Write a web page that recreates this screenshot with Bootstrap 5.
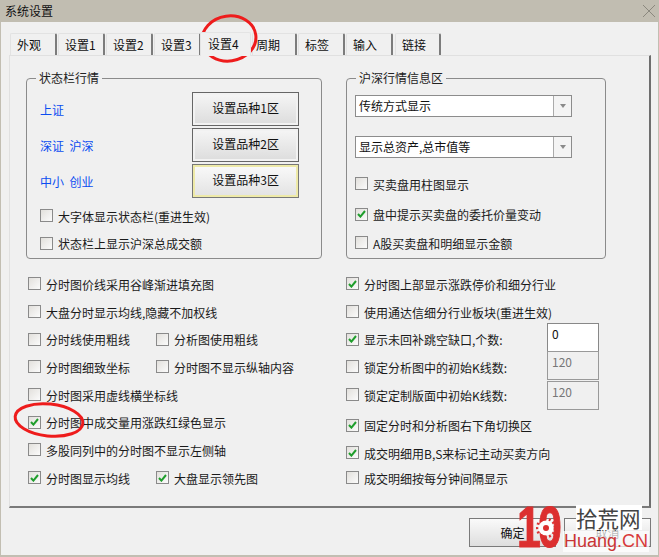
<!DOCTYPE html>
<html lang="zh-CN">
<head>
<meta charset="utf-8">
<title>系统设置</title>
<link href="https://cdn.jsdelivr.net/npm/bootstrap@5.3.0/dist/css/bootstrap.min.css" rel="stylesheet">
<style>
html,body{margin:0;padding:0;width:659px;height:557px;overflow:hidden;background:#f0f0f0}
body{font-family:"Noto Sans CJK SC","Liberation Sans",sans-serif;font-size:12px;line-height:16px;color:#1a1a1a}
.dlg{position:relative;width:659px;height:557px;background:#f0f0f0;border:solid #c2beb2;border-width:0 1px 2px 1px}
.dlg-title{height:22px;background:#c1bdb1;color:#111;margin:0 -1px;padding:0 4px 0 5px}
.dlg-close{width:12px;height:12px}
.tabrow{height:33px;padding:11px 0 0 9px;margin:0;flex-wrap:nowrap}
.tabrow .nav-item{margin-right:1px}
.tabbtn{display:flex;align-items:center;height:22px;width:47px;padding:0 0 0 6px;color:#111;background:#f0f0f0;text-decoration:none;border:solid;border-width:1px 2px 0 1px;border-color:#e2e2e2 #7c7c7c #e2e2e2 #e2e2e2;border-radius:2px 2px 0 0;font-size:12px}
.tabbtn:hover{color:#111}
.tabbtn.t-sm{width:45px;padding-left:3px}
.tabbtn.t-gap{margin-left:1px;width:46px}
.tabbtn.t-on{height:24px;width:51px;margin:-1px 0 0 -2px;padding:0 0 2px 7px;border:1px solid #e4e4e4;border-bottom:0;position:relative;z-index:1}
.tabpanel{width:642px;height:453px;margin-left:8px;border:solid;border-width:1px 2px 2px 1px;border-color:#e0e0e0 #6e6e6e #7a7a7a #e0e0e0;padding:22px 0 0 16px}
.fset{position:relative;border:1px solid #8b8b8b;border-radius:4px;height:181px}
.fset-a{width:296px;padding:12px 0 0 13px}
.fset-b{width:260px;margin-left:24px;padding:16px 0 0 8px}
.fset-cap{position:absolute;left:9px;top:-9px;float:none;width:auto;margin:0;background:#f0f0f0;padding:0 3px;color:#222;font-size:12px;line-height:16px;font-weight:400}
.areabtn{width:107px;height:34px;border:1px solid #666;border-radius:0;padding:0 0 2px;font-size:12px;color:#111;background:linear-gradient(#f6f6f6,#dcdcdc);box-shadow:inset 0 0 0 2px #f2f2f2}
.areabtn.b-focus{border-color:#777;box-shadow:inset 0 0 0 2px #eeeaa8;background:linear-gradient(#fafafa,#e2e2e2)}
.areabtn:hover{color:#111}
.arearow{height:36px;width:259px}
.arealabel{width:153px;padding-top:2px;color:#0b4df0;font-size:12px}
.ck{display:flex;align-items:center;white-space:nowrap;color:#1a1a1a;margin:0}
.ckbox{flex:0 0 auto;width:13px;height:13px;border:1px solid #8a8a8a;background:linear-gradient(135deg,#e2e0dc,#fbfbfb);display:flex;align-items:center;justify-content:center;margin:-2px 5px 0 0}
.ckbox svg{width:9px;height:8px;display:block}
.ck-a{height:27.5px}
.ck-b1{margin-top:13px}
.ck-b2{margin-top:3px}
.ck-b3{margin-top:1px}
.cbo{display:flex;width:217px;height:22px;border:1px solid #8c8c8c;background:#fff}
.cbo-second{margin-top:19px}
.cbo-txt{flex:1 1 auto;padding-left:3px;line-height:20px;color:#111;font-size:12px}
.cbo-arrow{width:18px;border-left:1px solid #ababab;display:flex;align-items:center;justify-content:center;background:#f4f4f4}
.cbo-tri{width:0;height:0;border:solid transparent;border-width:4px 3.5px 0;border-top-color:#8a8a8a}
.lowerwrap{margin-top:12px;margin-left:2px}
.colleft{width:318px}
.colright{width:270px}
.lrow{height:27.7px;display:flex;align-items:center}
.lcell{width:128px}
.numbox{width:52px;height:29px;border-radius:0;border:1px solid #888;padding:0 0 8px 4px;font-size:12px;color:#111;background:#fff;box-shadow:none;min-height:0;margin-left:auto;line-height:16px}
.numbox:disabled{background:#f0f0f0;color:#777;border-color:#999}
.nb-up3{margin-bottom:6px}
.nb-up2{margin-bottom:4px}
.lrow-r{width:253px}
.lrow-m6{margin-top:3px}
.lrow-m8{margin-top:-3px}
.footbtn{width:87px;height:29px;border:1px solid #7a7a7a;border-radius:0;padding:0;font-size:12px;color:#111;background:linear-gradient(#fafafa,#dedede)}
.footrow{padding:10px 0 0 468px;gap:8px}
.annot{position:absolute;left:0;top:0;pointer-events:none}
.wm{position:absolute;left:516px;top:504px;width:136px;height:50px;pointer-events:none}
.wm-ten{position:absolute;left:0;top:-7px;font:700 58px/60px "Liberation Sans",sans-serif;color:#dc2f2f;letter-spacing:-4px;transform:scaleX(.74);transform-origin:left;-webkit-text-stroke:1px #dc2f2f}
.wm-cn{position:absolute;left:59px;top:1px;width:66px;font-size:21.5px;line-height:25px;color:#444;background:#fff;white-space:nowrap}
.wm-en{position:absolute;left:46px;top:27px;font:400 18px/21px "Liberation Sans",sans-serif;color:#d83a3a;white-space:nowrap;background:rgba(255,255,255,.7);padding:0 1px}
.wm-en-h{color:#c93434}
.wm-gear{position:absolute;left:19px;top:13px}
</style>
</head>
<body>
<div class="dlg d-flex flex-column">
  <div class="dlg-title d-flex align-items-center justify-content-between">
    <span>系统设置</span>
    <svg class="dlg-close" viewBox="0 0 12 12"><path d="M0 0L12 12M12 0L0 12" stroke="#8b887e" stroke-width="1" fill="none"/></svg>
  </div>
  <ul class="nav tabrow">
    <li class="nav-item"><a class="tabbtn" href="#">外观</a></li>
    <li class="nav-item"><a class="tabbtn" href="#">设置1</a></li>
    <li class="nav-item"><a class="tabbtn" href="#">设置2</a></li>
    <li class="nav-item"><a class="tabbtn" href="#">设置3</a></li>
    <li class="nav-item"><a class="tabbtn t-on active" href="#">设置4</a></li>
    <li class="nav-item"><a class="tabbtn t-sm" href="#">周期</a></li>
    <li class="nav-item"><a class="tabbtn" href="#">标签</a></li>
    <li class="nav-item"><a class="tabbtn" href="#">输入</a></li>
    <li class="nav-item"><a class="tabbtn t-gap" href="#">链接</a></li>
  </ul>
  <div class="tabpanel">
    <div class="d-flex">
      <fieldset class="fset fset-a">
        <legend class="fset-cap">状态栏行情</legend>
        <div class="arearow d-flex align-items-center"><span class="arealabel">上证</span><button class="btn areabtn">设置品种1区</button></div>
        <div class="arearow d-flex align-items-center"><span class="arealabel">深证&nbsp;&nbsp;沪深</span><button class="btn areabtn">设置品种2区</button></div>
        <div class="arearow d-flex align-items-center"><span class="arealabel">中小&nbsp;&nbsp;创业</span><button class="btn areabtn b-focus">设置品种3区</button></div>
        <label class="ck ck-a mt-1"><span class="ckbox"></span>大字体显示状态栏(重进生效)</label>
        <label class="ck ck-a"><span class="ckbox"></span>状态栏上显示沪深总成交额</label>
      </fieldset>
      <fieldset class="fset fset-b">
        <legend class="fset-cap">沪深行情信息区</legend>
        <div class="cbo"><span class="cbo-txt">传统方式显示</span><span class="cbo-arrow"><span class="cbo-tri"></span></span></div>
        <div class="cbo cbo-second"><span class="cbo-txt">显示总资产,总市值等</span><span class="cbo-arrow"><span class="cbo-tri"></span></span></div>
        <label class="ck ck-a ck-b1"><span class="ckbox"></span>买卖盘用柱图显示</label>
        <label class="ck ck-a ck-b2"><span class="ckbox"><svg viewBox="0 0 9 8"><path d="M1 4L3.4 6.6L8 1" stroke="#1f9e2c" stroke-width="2" fill="none"/></svg></span>盘中提示买卖盘的委托价量变动</label>
        <label class="ck ck-a ck-b3"><span class="ckbox"></span>A股买卖盘和明细显示金额</label>
      </fieldset>
    </div>
    <div class="lowerwrap d-flex">
      <div class="colleft">
        <div class="lrow"><label class="ck"><span class="ckbox"></span>分时图价线采用谷峰渐进填充图</label></div>
        <div class="lrow"><label class="ck"><span class="ckbox"></span>大盘分时显示均线,隐藏不加权线</label></div>
        <div class="lrow"><label class="ck lcell"><span class="ckbox"></span>分时线使用粗线</label><label class="ck"><span class="ckbox"></span>分析图使用粗线</label></div>
        <div class="lrow"><label class="ck lcell"><span class="ckbox"></span>分时图细致坐标</label><label class="ck"><span class="ckbox"></span>分时图不显示纵轴内容</label></div>
        <div class="lrow"><label class="ck"><span class="ckbox"></span>分时图采用虚线横坐标线</label></div>
        <div class="lrow"><label class="ck"><span class="ckbox"><svg viewBox="0 0 9 8"><path d="M1 4L3.4 6.6L8 1" stroke="#1f9e2c" stroke-width="2" fill="none"/></svg></span>分时图中成交量用涨跌红绿色显示</label></div>
        <div class="lrow"><label class="ck"><span class="ckbox"></span>多股同列中的分时图不显示左侧轴</label></div>
        <div class="lrow"><label class="ck lcell"><span class="ckbox"><svg viewBox="0 0 9 8"><path d="M1 4L3.4 6.6L8 1" stroke="#1f9e2c" stroke-width="2" fill="none"/></svg></span>分时图显示均线</label><label class="ck"><span class="ckbox"><svg viewBox="0 0 9 8"><path d="M1 4L3.4 6.6L8 1" stroke="#1f9e2c" stroke-width="2" fill="none"/></svg></span>大盘显示领先图</label></div>
      </div>
      <div class="colright">
        <div class="lrow"><label class="ck"><span class="ckbox"><svg viewBox="0 0 9 8"><path d="M1 4L3.4 6.6L8 1" stroke="#1f9e2c" stroke-width="2" fill="none"/></svg></span>分时图上部显示涨跌停价和细分行业</label></div>
        <div class="lrow"><label class="ck"><span class="ckbox"></span>使用通达信细分行业板块(重进生效)</label></div>
        <div class="lrow lrow-r"><label class="ck"><span class="ckbox"><svg viewBox="0 0 9 8"><path d="M1 4L3.4 6.6L8 1" stroke="#1f9e2c" stroke-width="2" fill="none"/></svg></span>显示未回补跳空缺口,个数:</label><input class="form-control numbox nb-up3" value="0"></div>
        <div class="lrow lrow-r"><label class="ck"><span class="ckbox"></span>锁定分析图中的初始K线数:</label><input class="form-control numbox nb-up2" value="120" disabled></div>
        <div class="lrow lrow-r"><label class="ck"><span class="ckbox"></span>锁定定制版面中初始K线数:</label><input class="form-control numbox" value="120" disabled></div>
        <div class="lrow lrow-m6"><label class="ck"><span class="ckbox"><svg viewBox="0 0 9 8"><path d="M1 4L3.4 6.6L8 1" stroke="#1f9e2c" stroke-width="2" fill="none"/></svg></span>固定分时和分析图右下角切换区</label></div>
        <div class="lrow"><label class="ck"><span class="ckbox"><svg viewBox="0 0 9 8"><path d="M1 4L3.4 6.6L8 1" stroke="#1f9e2c" stroke-width="2" fill="none"/></svg></span>成交明细用B,S来标记主动买卖方向</label></div>
        <div class="lrow lrow-m8"><label class="ck"><span class="ckbox"></span>成交明细按每分钟间隔显示</label></div>
      </div>
    </div>
  </div>
  <div class="footrow d-flex">
    <button class="btn footbtn">确定</button>
    <button class="btn footbtn">取消</button>
  </div>
  <svg class="annot" width="659" height="557" viewBox="0 0 659 557">
    <ellipse cx="228" cy="38.5" rx="27" ry="22.5" fill="none" stroke="#ee1c1c" stroke-width="3" transform="rotate(-8 228 38.5)"/>
    <ellipse cx="48" cy="420" rx="34" ry="16" fill="none" stroke="#ee1c1c" stroke-width="3" transform="rotate(6 48 420)"/>
  </svg>
  <div class="wm">
    <span class="wm-cn">拾荒网</span>
    <span class="wm-en"><span class="wm-en-h">Huang</span>.CN</span>
    <span class="wm-ten">10</span>
    <svg class="wm-gear" width="20" height="22" viewBox="0 0 20 22"><circle cx="10" cy="11" r="7.5" fill="#fff"/><circle cx="10" cy="11" r="3" fill="#dc2f2f"/><circle cx="10" cy="11" r="9" fill="none" stroke="#dc2f2f" stroke-width="2.5" stroke-dasharray="2 2.5"/></svg>
  </div>
</div>
</body>
</html>
